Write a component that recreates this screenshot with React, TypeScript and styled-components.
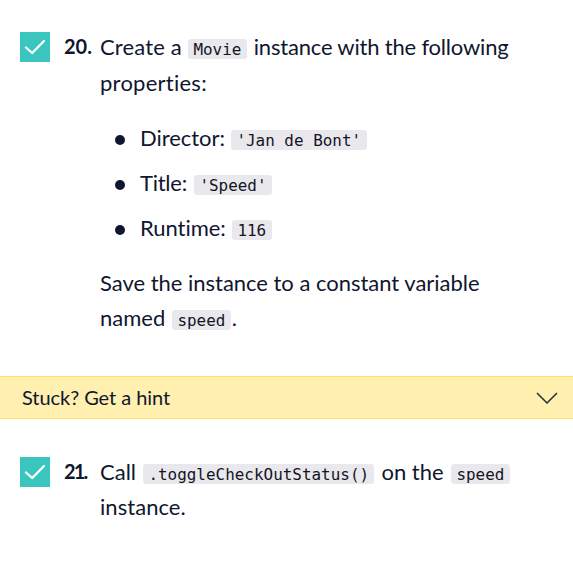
import React from "react";
import styled, { createGlobalStyle } from "styled-components";

const GlobalStyle = createGlobalStyle`
  body {
    margin: 0;
    background: #fff;
    color: #10162f;
    font-family: Lato, "Open Sans", sans-serif;
    font-size: 22px;
    font-variant-ligatures: none;
    overflow: hidden;
  }
  * { box-sizing: border-box; }
`;

const Panel = styled.main`
  width: 573px;
  height: 561px;
`;

const Task = styled.section<{ $height: number; $top: number }>`
  display: grid;
  grid-template-columns: 44px 36px 1fr;
  height: ${(p) => p.$height}px;
  padding: ${(p) => p.$top}px 0 0 20px;
`;

const Check = styled.span`
  display: grid;
  place-items: center;
  width: 30px;
  height: 30px;
  margin-top: 3px;
  background: #3ac5bf;
`;

const Numeral = styled.strong<{ $spacing?: number }>`
  height: 36px;
  line-height: 35px;
  font-size: 20px;
  font-weight: 700;
  white-space: nowrap;
  letter-spacing: ${(p) => p.$spacing ?? 0}px;
`;

const Line = styled.div<{ $height?: number }>`
  display: flex;
  align-items: baseline;
  height: ${(p) => p.$height ?? 36}px;
  line-height: 36px;
  white-space: nowrap;
`;

const Phrase = styled.span<{ $width: number; $spacing?: number; $indent?: number }>`
  flex: none;
  width: ${(p) => p.$width}px;
  padding-left: ${(p) => p.$indent ?? 0}px;
  letter-spacing: ${(p) => p.$spacing ?? 0}px;
`;

const Code = styled.code`
  flex: none;
  height: 20px;
  padding: 0 5.4px;
  border-radius: 3px;
  background: #e9e8ed;
  color: #15141f;
  font: 15.94px/22px "DejaVu Sans Mono", monospace;
`;

const List = styled.ul`
  margin: 19px 0;
  padding: 0;
  list-style: none;
  display: grid;
  gap: 9px;
`;

const Item = styled.li`
  display: grid;
  grid-template-columns: 25px 1fr;
  align-items: center;
  padding-left: 15px;
`;

const Bullet = styled.span`
  width: 10px;
  height: 10px;
  margin-top: 3px;
  border-radius: 50%;
  background: #10162f;
`;

const Hint = styled.button`
  display: flex;
  align-items: center;
  justify-content: space-between;
  width: 100%;
  height: 43px;
  padding: 0 15px 2px 22px;
  border: solid #ffe065;
  border-width: 1px 0;
  background: #fff0b0;
  color: #10162f;
  font: 20px Lato, sans-serif;
  text-align: left;
`;

const Chevron = styled.svg`
  margin-top: 2px;
`;

const CheckMark = () => (
  <Check>
    <svg width="22" height="16" viewBox="0 0 22 16" fill="none">
      <path d="M2 8.5L8.2 14L20 2" stroke="#fff" strokeWidth="2.3" strokeLinecap="round" strokeLinejoin="round" />
    </svg>
  </Check>
);

const properties = [
  { label: "Director:", width: 91, spacing: -0.05, value: "'Jan de Bont'" },
  { label: "Title:", width: 54, spacing: -0.25, value: "'Speed'" },
  { label: "Runtime:", width: 92, spacing: -0.05, value: "116" },
];

export default function App() {
  return (
    <Panel>
      <GlobalStyle />
      <Task $height={376} $top={29}>
        <CheckMark />
        <Numeral>20.</Numeral>
        <div>
          <Line>
            <Phrase $width={88} $spacing={0.15}>Create a</Phrase>
            <Code>Movie</Code>
            <Phrase $width={270} $indent={7} $spacing={-0.19}>instance with the following</Phrase>
          </Line>
          <Line><Phrase $width={120} $spacing={0.25}>properties:</Phrase></Line>
          <List>
            {properties.map((p) => (
              <Item key={p.label}>
                <Bullet />
                <Line>
                  <Phrase $width={p.width} $spacing={p.spacing}>{p.label}</Phrase>
                  <Code>{p.value}</Code>
                </Line>
              </Item>
            ))}
          </List>
          <Line $height={35}><Phrase $width={400} $spacing={-0.02}>Save the instance to a constant variable</Phrase></Line>
          <Line>
            <Phrase $width={72}>named</Phrase>
            <Code>speed</Code>
            <Phrase $width={10} $indent={1}>.</Phrase>
          </Line>
        </div>
      </Task>
      <Hint>
        <Phrase $width={160} $spacing={-0.05}>Stuck? Get a hint</Phrase>
        <Chevron width="22" height="12" viewBox="0 0 22 12" fill="none">
          <path d="M1 1L11 11L21 1" stroke="#282c38" strokeWidth="1.5" />
        </Chevron>
      </Hint>
      <Task $height={142} $top={35}>
        <CheckMark />
        <Numeral $spacing={-1.8}>21.</Numeral>
        <div>
          <Line $height={35}>
            <Phrase $width={43}>Call</Phrase>
            <Code>.toggleCheckOutStatus()</Code>
            <Phrase $width={76.5} $indent={7}>on the</Phrase>
            <Code>speed</Code>
          </Line>
          <Line><Phrase $width={120} $spacing={0.05}>instance.</Phrase></Line>
        </div>
      </Task>
    </Panel>
  );
}
